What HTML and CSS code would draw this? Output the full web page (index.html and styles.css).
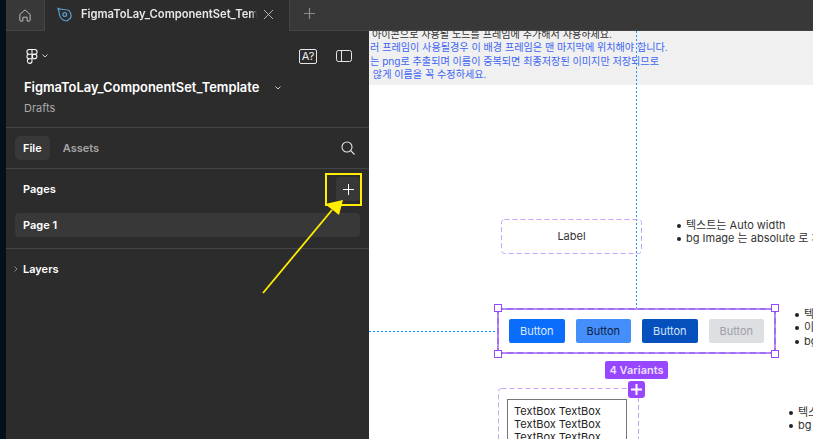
FILE: index.html
```html
<!DOCTYPE html>
<html lang="ko">
<head>
  <meta charset="UTF-8" />
  <title>FigmaToLay_ComponentSet_Template</title>
  <link rel="stylesheet" href="styles.css">
</head>
<body>
  <div class="app">
    <div class="tabbar">
      <div class="home-tab">
        <svg width="12" height="13" viewBox="0 0 14 15" fill="none" stroke="#c4c4c4" stroke-width="1.1"><path d="M1 6.2 7 1l6 5.2V13a1 1 0 0 1-1 1H9.500V9.500h-5V14H2a1 1 0 0 1-1-1z"/></svg>
      </div>
      <div class="file-tab">
        <svg class="tab-icon" width="15" height="15" viewBox="0 0 15 15" fill="none" stroke="#5a9fd0" stroke-width="1.2"><path d="M1 1.500C4 3 9 2 12 3.500 14 6 14.500 9 13.500 11L10 14C6 14 3 11 2.500 8 2.500 6 1.500 3 1 1.500z"/><circle cx="7.800" cy="7.500" r="1.900"/></svg>
        <span class="file-tab-name">FigmaToLay_ComponentSet_Template</span>
        <svg class="tab-close" width="11" height="11" viewBox="0 0 11 11" fill="none" stroke="#b5b5b5" stroke-width="1"><path d="M1 1 10 10M10 1 1 10"/></svg>
      </div>
      <div class="new-tab">
        <svg width="11" height="11" viewBox="0 0 11 11" stroke="#8a8a8a" stroke-width="1.2"><path d="M5.500 0v11M0 5.500h11"/></svg>
      </div>
    </div>

    <div class="workspace">
      <aside class="sidebar">
        <section class="side-head">
          <div class="head-tools">
            <svg class="logo" width="12" height="17" viewBox="0 0 13 17" fill="none" stroke="#fff" stroke-width="1.1"><path d="M6.500 1H3.500a2.500 2.500 0 0 0 0 5h3zM6.500 1h3a2.500 2.500 0 0 1 0 5h-3zM6.500 6h-3a2.500 2.500 0 0 0 0 5h3zM6.500 11h-3a2.500 2.500 0 1 0 3 2.500z"/><circle cx="9.300" cy="8.500" r="2.500"/></svg>
            <svg class="chev" width="6" height="4" viewBox="0 0 6 4" fill="none" stroke="#ccc"><path d="M.5.5 3 3 5.500.5"/></svg>
            <span class="spacer"></span>
            <span class="lang-icon">A?</span>
            <svg class="panel-icon" width="16" height="12" viewBox="0 0 16 12" fill="none" stroke="#e6e6e6"><rect x=".5" y=".5" width="15" height="11" rx="2"/><path d="M5.500.5v11"/></svg>
          </div>
          <div class="title-row">
            <span class="file-title">FigmaToLay_ComponentSet_Template</span>
            <svg class="chev" width="6" height="4" viewBox="0 0 6 4" fill="none" stroke="#ccc"><path d="M.5.5 3 3 5.500.5"/></svg>
          </div>
          <div class="file-loc">Drafts</div>
        </section>

        <section class="side-tabs">
          <span class="pill">File</span>
          <span class="tab-link">Assets</span>
          <span class="spacer"></span>
          <svg width="14" height="14" viewBox="0 0 14 14" fill="none" stroke="#e6e6e6" stroke-width="1.1"><circle cx="6" cy="6" r="5"/><path d="M9.700 9.700 13.500 13.500"/></svg>
        </section>

        <section class="side-pages">
          <div class="pages-head">
            <span class="side-label">Pages</span>
            <span class="add-page">
              <svg width="11" height="11" viewBox="0 0 11 11" stroke="#fff"><path d="M5.500 0v11M0 5.500h11"/></svg>
            </span>
          </div>
          <div class="page-row">Page 1</div>
        </section>

        <section class="side-layers">
          <svg width="4" height="6" viewBox="0 0 4 6" fill="none" stroke="#888"><path d="M.5.500 3 3 .5 5.500"/></svg>
          <span class="side-label">Layers</span>
        </section>
      </aside>

      <main class="canvas">
        <div class="note-band">
          <p class="note-dark">아이콘으로 사용될 노드를 프레임에 추가해서 사용하세요.</p>
          <p>러 프레임이 사용될경우 이 배경 프레임은 맨 마지막에 위치해야 합니다.</p>
          <p>는 png로 추출되며 이름이 중복되면 최종저장된 이미지만 저장되므로</p>
          <p>&nbsp;않게 이름을 꼭 수정하세요.</p>
        </div>

        <div class="guide guide-v"></div>
        <div class="guide guide-h"></div>

        <div class="label-box">
          <svg class="dash-frame" width="141" height="35"><rect x=".5" y=".5" width="140" height="34" rx="3"/></svg>
          Label
        </div>
        <ul class="bullets bullets-label">
          <li>텍스트는 Auto width</li>
          <li>bg Image 는 absolute 로 처리</li>
        </ul>

        <div class="variant-set">
          <button class="btn btn-primary">Button</button>
          <button class="btn btn-hover">Button</button>
          <button class="btn btn-pressed">Button</button>
          <button class="btn btn-disabled">Button</button>
          <i class="handle tl"></i><i class="handle tr"></i><i class="handle bl"></i><i class="handle br"></i>
        </div>
        <ul class="bullets bullets-button">
          <li>텍스트</li>
          <li>이미지</li>
          <li>bg</li>
        </ul>

        <div class="variant-count">4 Variants</div>

        <div class="textbox-set">
          <svg class="dash-frame" width="141" height="90"><rect x=".5" y=".5" width="140" height="89" rx="3"/></svg>
          <div class="textbox">TextBox TextBox TextBox TextBox TextBox TextBox</div>
        </div>
        <span class="variant-add">
          <svg width="11" height="11" viewBox="0 0 11 11" stroke="#fff" stroke-width="2"><path d="M5.500 0v11M0 5.500h11"/></svg>
        </span>
        <ul class="bullets bullets-textbox">
          <li>텍스트</li>
          <li>bg</li>
        </ul>
      </main>
    </div>
  </div>

  <!-- yellow annotation drawn over the screenshot -->
  <div class="mark-box"></div>
  <svg class="mark-arrow" width="100" height="110" viewBox="0 0 100 110">
    <path d="M3 103 72 20" stroke="#ffee00" stroke-width="1.800" fill="none"/>
    <path d="M83 10 65 14 79 25z" fill="#ffee00"/>
  </svg>
</body>
</html>
```

FILE: styles.css
```css
* { box-sizing: border-box; }
html, body { margin: 0; height: 100%; overflow: hidden; }
body {
  position: relative;
  width: 813px; height: 439px;
  padding-left: 6px;
  background: #03101c;
  font-family: Inter, "Noto Sans CJK KR", sans-serif;
  font-size: 11px;
  color: #fff;
}
p, ul { margin: 0; padding: 0; }
.spacer { flex: 1; }
.app { display: flex; flex-direction: column; height: 100%; }

/* tab bar */
.tabbar {
  display: flex; flex: none;
  height: 31px;
  background: #383838;
  border-bottom: 1px solid #444;
}
.home-tab {
  display: flex; align-items: center; justify-content: center;
  width: 39px; padding-right: 1px;
  border-right: 1px solid #444;
}
.file-tab {
  display: flex; align-items: center;
  width: 245px;
  padding: 0 15px 3px 12px;
  margin-bottom: -1px;
  background: #2c2c2c;
  border-right: 1px solid #444;
}
.tab-icon, .tab-close { flex: none; }
.file-tab-name {
  flex: 1; margin-left: 9px; margin-right: 6px;
  overflow: hidden; white-space: nowrap;
  font-size: 11.200px; font-weight: 600; color: #e8e8e8;
  -webkit-mask-image: linear-gradient(to left, transparent, #000 6px);
  mask-image: linear-gradient(to left, transparent, #000 6px);
}
.new-tab { display: flex; align-items: center; padding: 0 0 3px 14px; }

/* left panel */
.workspace { display: flex; flex: 1; min-height: 0; }
.sidebar { flex: none; width: 363px; background: #2c2c2c; }
.sidebar section { border-bottom: 1px solid #444; }
.side-head { height: 97px; padding: 16px 17px 0 18px; }
.head-tools { display: flex; align-items: center; height: 18px; }
.head-tools .logo { margin-left: 2px; }
.head-tools .chev { margin-left: 4px; }
.lang-icon {
  width: 18px; height: 15px;
  border: 1px solid #e6e6e6; border-radius: 2px;
  margin-right: 19px;
  font-size: 11px; line-height: 13px; text-align: center; color: #eee;
}
.title-row { display: flex; align-items: center; margin-top: 13px; }
.file-title { font-size: 12.900px; font-weight: 600; line-height: 20px; }
.title-row .chev { margin-left: 16px; }
.file-loc { margin-top: 2px; line-height: 16px; color: #aaa; }

.side-tabs { display: flex; align-items: center; height: 41px; padding: 0 14px 0 9px; }
.pill {
  padding: 0 8px; height: 24px;
  background: #383838; border-radius: 5px;
  font-weight: 600; line-height: 24px;
}
.tab-link { margin-left: 13px; font-weight: 600; color: #a5a5a5; }

.side-pages { height: 80px; padding: 8px 9px 0; }
.pages-head { display: flex; align-items: center; justify-content: space-between; height: 24px; }
.side-label { font-weight: 600; }
.pages-head .side-label { margin-left: 8px; }
.add-page {
  display: flex; align-items: center; justify-content: center;
  width: 24px; height: 24px;
  background: #383838; border-radius: 4px;
}
.page-row {
  height: 24px; margin-top: 12px; padding-left: 8px;
  background: #383838; border-radius: 4px;
  font-weight: 600; line-height: 24px;
}
.sidebar .side-layers {
  display: flex; align-items: center; gap: 5px;
  height: 40px; padding-left: 8px;
  border-bottom: none;
}

/* canvas */
.canvas {
  position: relative;
  flex: 1; overflow: hidden;
  background: #fff;
  color: #333;
}
.note-band {
  height: 57px;
  margin-top: -3px;
  padding-left: 1px;
  background: #f0f0f0;
  color: #3f66f2;
  font-size: 10.100px; line-height: 13.300px;
  white-space: nowrap;
}
.note-band .note-dark { padding-left: 2px; color: #333; }
.guide { position: absolute; }
.guide-v {
  left: 267px; top: 0; width: 1px; height: 277px;
  background: repeating-linear-gradient(to bottom, #0d99ff 0 2px, transparent 2px 4px);
}
.guide-h {
  left: 0; top: 300px; width: 128px; height: 1px;
  background: repeating-linear-gradient(to right, #0d99ff 0 2px, transparent 2px 4px);
}

.dash-frame { position: absolute; left: 0; top: 0; }
.dash-frame rect { fill: none; stroke: #c4a3fa; stroke-dasharray: 5 3; }
.label-box {
  position: absolute; left: 132px; top: 188px;
  width: 141px; height: 35px;
  line-height: 35px; text-align: center;
  color: #333;
}
.bullets {
  position: absolute;
  padding-left: 9px;
  line-height: 13.300px;
  list-style: none;
  white-space: nowrap;
  color: #333;
}
.bullets li { position: relative; }
.bullets li::before {
  content: "";
  position: absolute; left: -9.500px; top: 5px;
  width: 4px; height: 4px;
  background: #222; border-radius: 50%;
}
.bullets-label { left: 308px; top: 188px; }
.bullets-button { left: 426px; top: 277px; }
.bullets-textbox { left: 420px; top: 375px; }

.variant-set {
  position: absolute; left: 128px; top: 277px;
  display: flex; gap: 11px;
  width: 279px; height: 46px;
  padding: 9px 10px;
  border: 2px dashed #a06bf5;
  background: linear-gradient(#fff, #fff) padding-box, #b48cf8 border-box;
}
.btn {
  flex: 1; height: 24px; padding: 0;
  border: none; border-radius: 2px;
  font-family: inherit; font-size: 11px;
}
.btn-primary { background: #0b6dfb; color: #dce9ff; }
.btn-hover { background: #458ffc; color: #10213d; }
.btn-pressed { background: #0550bd; color: #d6e4fb; }
.btn-disabled { background: #dedfe3; color: #a0a0a6; }
.handle {
  position: absolute;
  width: 8px; height: 8px;
  background: #fff; border: 1px solid #9747ff;
}
.tl { left: -5px; top: -6px; }
.tr { right: -5px; top: -6px; }
.bl { left: -5px; bottom: -6px; }
.br { right: -5px; bottom: -6px; }

.variant-count {
  position: absolute; left: 236px; top: 330px;
  width: 63px; height: 18px;
  background: #9747ff; border-radius: 2px;
  font-weight: 600; line-height: 18px; text-align: center;
  color: #ecdfff;
}
.textbox-set {
  position: absolute; left: 129px; top: 357px;
  width: 141px; height: 90px;
  padding: 11px 9px;
}
.textbox {
  position: relative;
  width: 120px; height: 70px;
  padding: 5px 6px;
  border: 1px solid #777;
  line-height: 13px;
  color: #222;
}
.variant-add {
  position: absolute; left: 259px; top: 350px;
  display: flex; align-items: center; justify-content: center;
  width: 17px; height: 17px;
  background: #9747ff; border-radius: 3px;
}

/* annotation */
.mark-box {
  position: absolute; left: 325px; top: 173px;
  width: 37px; height: 33px;
  border: 2px solid #ffee00;
}
.mark-arrow { position: absolute; left: 260px; top: 190px; }
```
